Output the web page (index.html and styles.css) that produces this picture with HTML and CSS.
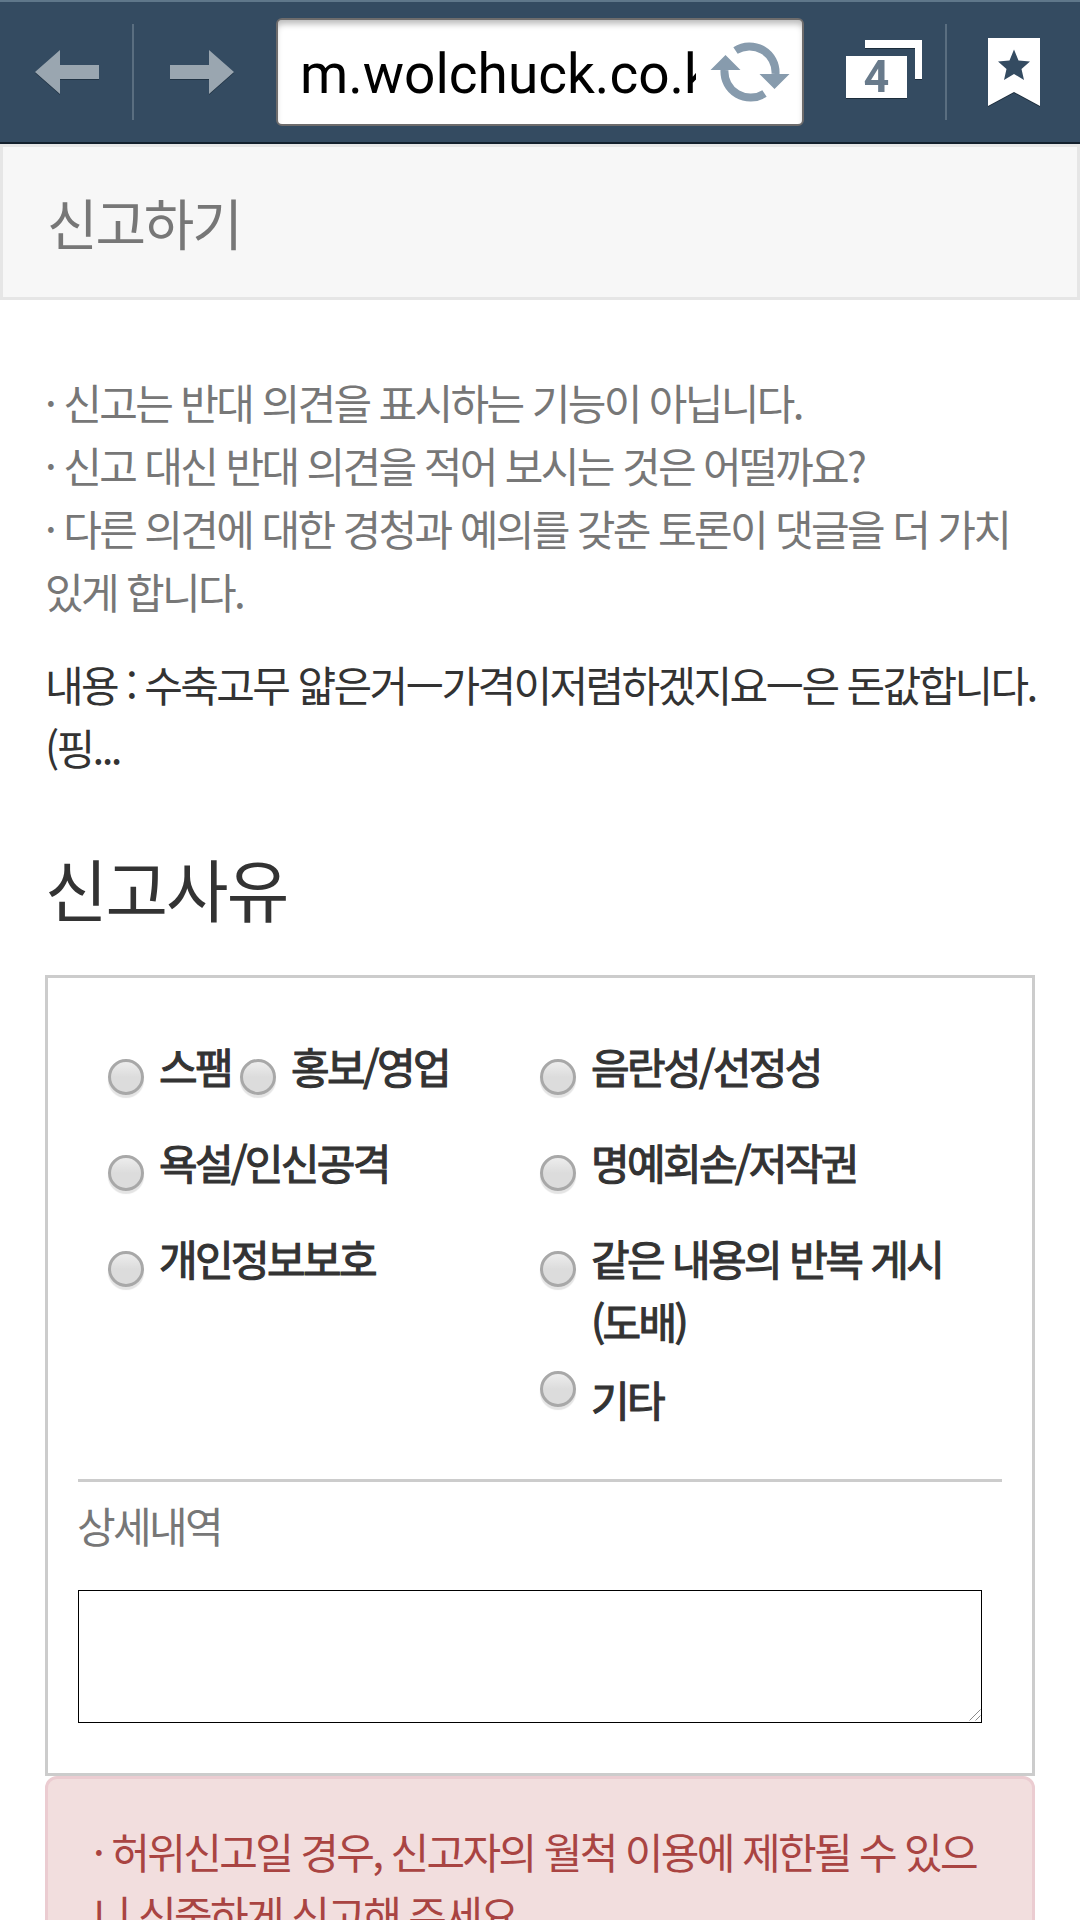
FILE: index.html
```html
<!doctype html>
<html lang="ko">

	<head>
		<title>신고하기</title>
		<meta charset="utf-8" />
		<link rel="stylesheet" href="styles.css">
	</head>

	<body>

		<div class="toolbar">
			<svg class="arrow" width="65" height="46" viewBox="0 0 65 46">
				<path d="M0 23 25 1V16H64V30H25V45Z" />
			</svg>
			<span class="line"></span>
			<svg class="arrow next" width="65" height="46" viewBox="0 0 65 46">
				<path d="M64 23 39 1V16H0V30H39V45Z" />
			</svg>
			<div class="address">
				<span class="url">m.wolchuck.co.kr</span>
				<svg class="reload" width="80" height="64" viewBox="0 0 80 64">
					<path class="ring" d="M25.5 10.5A26 26 0 0 1 65.5 34M54.5 53.5A26 26 0 0 1 14.5 30" />
					<path d="M.5 30 15.5 15 30.5 30ZM49.5 34H79.5L64.5 49Z" />
				</svg>
			</div>
			<div class="tabs">
				<svg width="77" height="60" viewBox="0 0 77 60">
					<path d="M19 0H76V39H69V8H19ZM0 16H61V58H0Z" />
				</svg>
				<span>4</span>
			</div>
			<span class="line"></span>
			<svg class="bookmark" width="52" height="69" viewBox="0 0 52 69">
				<path class="flag" d="M0 0H52V68L26 54 0 68Z" />
				<path class="star" d="M26 11.5 30.5 22.5 42 23.5 33.5 31 36 42 26 36 16 42 18.5 31 10 23.5 21.5 22.5Z" />
			</svg>
		</div>

		<h1 class="title">신고하기</h1>

		<div class="content">
			<p class="guide">
				· 신고는 반대 의견을 표시하는 기능이 아닙니다.<br>
				· 신고 대신 반대 의견을 적어 보시는 것은 어떨까요?<br>
				· 다른 의견에 대한 경청과 예의를 갖춘 토론이 댓글을 더 가치<br>
				있게 합니다.
			</p>
			<p class="quote">내용 : 수축고무 얇은거ㅡ가격이저렴하겠지요ㅡ은 돈값합니다.<br>(핑...</p>

			<h2>신고사유</h2>

			<form class="box">
				<div class="reasons">
					<ul>
						<li>
							<label><input type="radio" name="reason"><span>스팸</span></label>
							<label><input type="radio" name="reason"><span>홍보/영업</span></label>
						</li>
						<li><label><input type="radio" name="reason"><span>욕설/인신공격</span></label></li>
						<li><label><input type="radio" name="reason"><span>개인정보보호</span></label></li>
					</ul>
					<ul>
						<li><label><input type="radio" name="reason"><span>음란성/선정성</span></label></li>
						<li><label><input type="radio" name="reason"><span>명예회손/저작권</span></label></li>
						<li class="long"><label><input type="radio" name="reason"><span>같은 내용의 반복 게시<br>(도배)</span></label></li>
						<li class="etc"><label><input type="radio" name="reason"><span>기타</span></label></li>
					</ul>
				</div>
				<div class="detail">
					<p>상세내역</p>
					<div class="memo">
						<textarea></textarea>
						<svg class="grip" width="12" height="12" viewBox="0 0 12 12">
							<path d="M.5 11.500 11.500 .5M6.500 11.500 11.500 6.500" />
						</svg>
					</div>
				</div>
			</form>

			<div class="alert">· 허위신고일 경우, 신고자의 월척 이용에 제한될 수 있으<br>니 신중하게 신고해 주세요.</div>
		</div>

	</body>

</html>
```
FILE: styles.css
```css
* {
	box-sizing: border-box;
}

body {
	margin: 0;
	height: 1920px;
	overflow: hidden;
	background: #fff;
	color: #333;
	font: 42px/63px "Noto Sans CJK KR", sans-serif;
	letter-spacing: -2.64px;
	white-space: nowrap;
}

h1, h2, p, ul {
	margin: 0;
	padding: 0;
	font-weight: normal;
}

ul {
	list-style: none;
}

/* 브라우저 툴바 */
.toolbar {
	display: flex;
	align-items: center;
	height: 144px;
	padding-left: 35px;
	background: #344b61;
	border-top: 2px solid #5f778a;
	border-bottom: 2px solid #13202d;
}

.toolbar svg {
	display: block;
	flex: none;
}

.arrow {
	margin-right: 32px;
	fill: #9aa6b0;
	filter: drop-shadow(0 1px 0 #223445);
}

.arrow.next {
	margin: 0 41px 0 36px;
}

.line {
	flex: none;
	width: 2px;
	height: 96px;
	background: #5a6e80;
}

.address {
	display: flex;
	align-items: center;
	width: 528px;
	height: 108px;
	padding-left: 22px;
	background: #fff;
	border: 2px solid #6e6c6c;
	border-radius: 6px;
	box-shadow: inset 0 6px 6px -2px #bbb;
}

.url {
	width: 396px;
	padding-top: 4px;
	overflow: hidden;
	color: #000;
	font: 55px/70px Roboto, sans-serif;
	letter-spacing: 0;
}

.reload {
	margin-left: 14px;
	fill: #879bad;
}

.ring {
	fill: none;
	stroke: #879bad;
	stroke-width: 8;
}

.tabs {
	position: relative;
	margin: -4px 22px 0 42px;
	fill: #fff;
	filter: drop-shadow(0 1px 0 #1c2c3b);
}

.tabs span {
	position: absolute;
	left: 0;
	top: 16px;
	width: 61px;
	color: #687a8b;
	font: bold 45px/42px Roboto, sans-serif;
	letter-spacing: 0;
	text-align: center;
}

.bookmark {
	margin-left: 41px;
	filter: drop-shadow(0 1px 0 #1c2c3b);
}

.flag {
	fill: #fff;
}

.star {
	fill: #344b61;
}

/* 본문 */
.title {
	height: 156px;
	padding-left: 44px;
	background: #f7f7f7;
	border: 3px solid #e6e6e6;
	color: #777;
	font-size: 55px;
	line-height: 148px;
	letter-spacing: -2.2px;
}

.content {
	padding: 70px 45px 0;
}

.guide {
	color: #777;
}

.quote {
	margin-top: 30px;
}

h2 {
	margin: 60px 0 38px;
	font-size: 68px;
	line-height: 99px;
	letter-spacing: -2px;
}

.box {
	height: 801px;
	padding: 56px 30px 0;
	border: 3px solid #ccc;
}

.reasons {
	display: flex;
	height: 448px;
	padding-left: 30px;
	border-bottom: 3px solid #ccc;
	-webkit-text-stroke: 1.1px #333;
}

.reasons ul {
	width: 432px;
}

.reasons li {
	display: flex;
	gap: 9px;
	margin-bottom: 33px;
}

.reasons li.long {
	margin-bottom: 15px;
}

.reasons label {
	display: flex;
	align-items: flex-start;
}

.reasons input {
	appearance: none;
	width: 36px;
	height: 36px;
	margin: 25px 15px 0 0;
	border: 3px solid #a8a8a8;
	border-radius: 50%;
	background: linear-gradient(#ededed, #dcdcdc 50%);
	box-shadow: 0 3px 1px #e4e4e4;
}

.reasons .etc input {
	margin-top: 4px;
}

.detail p {
	margin: 11px 0 0 -1px;
	color: #777;
}

.memo {
	position: relative;
	width: 904px;
	margin-top: 34px;
}

.memo textarea {
	display: block;
	width: 904px;
	height: 133px;
	border: 1px solid #000;
	background: #fff;
	resize: none;
}

/* 크기 조절 손잡이 */
.grip {
	position: absolute;
	right: 1px;
	bottom: 2px;
	fill: none;
	stroke: #8a8a8a;
}

.alert {
	height: 220px;
	padding: 40px 45px;
	background: #f2dede;
	border: 3px solid #ebccd1;
	border-radius: 12px;
	color: #a94442;
}
```
